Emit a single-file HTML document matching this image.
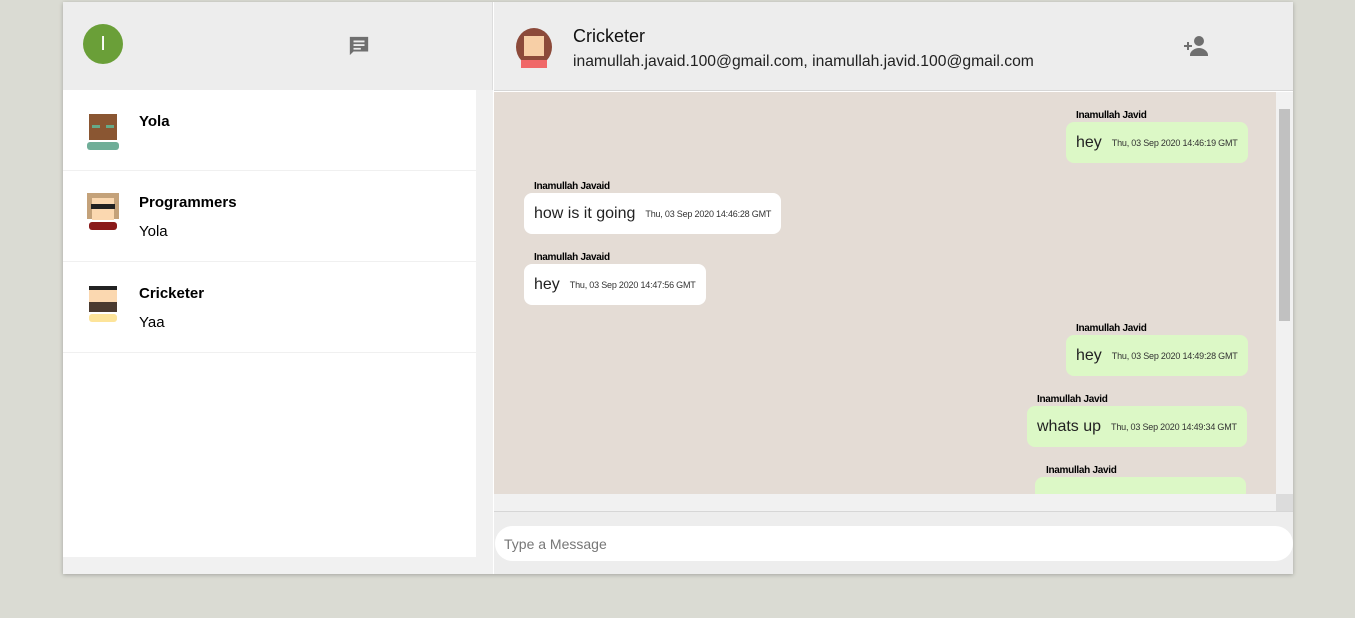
<!DOCTYPE html><html><head><style>
*{margin:0;padding:0;box-sizing:border-box}
body{width:1355px;height:618px;background:#dadbd3;font-family:"Liberation Sans",sans-serif;position:relative;overflow:hidden}
.a{position:absolute}
.app{left:63px;top:2px;width:1230px;height:572px;background:#fff;box-shadow:0 1px 4px rgba(0,0,0,.25)}
.name{font-size:10px;font-weight:bold;color:#000;letter-spacing:-.3px}
.b{position:absolute;height:41px;border-radius:8px;padding:0 10px;display:flex;align-items:center;font-size:16px;color:#222;white-space:nowrap}
.b small{font-size:9px;margin-left:10px;color:#333;letter-spacing:-.2px}
.g{background:#dcf8c6}.w{background:#fff}
.row{position:absolute;left:0;width:413px;border-bottom:1px solid #f0f0f0}
.row b{position:absolute;left:76px;font-size:15px}
.row span{position:absolute;left:76px;font-size:15px}
</style></head><body>
<div class="a app">
 <div class="a" style="left:0;top:0;width:430px;height:88px;background:#ededed;border-right:1px solid #ddd"></div>
 <div class="a" style="left:20px;top:22px;width:40px;height:40px;border-radius:50%;background:#6a9f38;color:#fff;font-size:20px;text-align:center;line-height:40px">I</div>
 <svg class="a" style="left:285px;top:33px" width="22" height="22" viewBox="0 0 24 24"><path fill="#6f6f6f" d="M2 2h20v16H6l-4 4zM6 6v2h12V6zm0 4v2h12v-2zm0 4v2h8v-2z"/></svg>
 <div class="a" style="left:0;top:88px;width:413px;height:467px;background:#fff">
  <div class="row" style="top:0;height:81px"><svg class="a" style="left:24px;top:24px" width="32" height="36"><rect x="2" y="0" width="28" height="26" fill="#8a5632"/><rect x="5" y="11" width="8" height="3" fill="#6a8"/><rect x="19" y="11" width="8" height="3" fill="#6a8"/><rect x="0" y="28" width="32" height="8" rx="3" fill="#6fae98"/></svg><b style="top:23px">Yola</b></div>
  <div class="row" style="top:81px;height:91px"><svg class="a" style="left:24px;top:22px" width="32" height="38"><rect x="0" y="0" width="32" height="26" fill="#c4a27a"/><rect x="5" y="5" width="22" height="22" fill="#fbd8b0"/><rect x="4" y="11" width="24" height="5" fill="#222"/><rect x="2" y="29" width="28" height="8" rx="3" fill="#8a1a1a"/></svg><b style="top:23px">Programmers</b><span style="top:52px">Yola</span></div>
  <div class="row" style="top:172px;height:91px"><svg class="a" style="left:24px;top:24px" width="32" height="38"><rect x="2" y="0" width="28" height="26" fill="#fbd8b0"/><rect x="2" y="0" width="28" height="4" fill="#222"/><rect x="2" y="16" width="28" height="10" fill="#4a3a30"/><rect x="2" y="28" width="28" height="8" rx="3" fill="#fde49a"/></svg><b style="top:23px">Cricketer</b><span style="top:52px">Yaa</span></div>
 </div>
 <div class="a" style="left:413px;top:88px;width:17px;height:467px;background:#f1f1f1"></div>
 <div class="a" style="left:0;top:555px;width:430px;height:17px;background:#f1f1f1"></div>
 <div class="a" style="left:431px;top:0;width:799px;height:89px;background:#ededed;border-bottom:1px solid #d6d6d6"></div>
 <svg class="a" style="left:452px;top:26px" width="38" height="40"><ellipse cx="19" cy="19" rx="18" ry="19" fill="#8c4a3a"/><rect x="9" y="8" width="20" height="20" fill="#f7cfa6"/><rect x="6" y="32" width="26" height="8" fill="#f06868"/></svg>
 <div class="a" style="left:510px;top:24px;font-size:18px;color:#111">Cricketer</div>
 <div class="a" style="left:510px;top:51px;font-size:15.7px;color:#222">inamullah.javaid.100@gmail.com, inamullah.javid.100@gmail.com</div>
 <svg class="a" style="left:1120px;top:33px" width="26" height="22" viewBox="0 0 26 22"><path fill="#6f6f6f" d="M4 7h2v3h3v2H6v3H4v-3H1v-2h3zM16 1a5 5 0 1 1 0 10a5 5 0 1 1 0-10zM7 20c0-4 5-7 9-7s9 3 9 7v1H7z"/></svg>
 <div class="a" style="left:431px;top:90px;width:782px;height:402px;background:#e4dcd5;overflow:hidden">
  <div class="a name" style="left:582px;top:18px">Inamullah Javid</div>
  <div class="b g" style="left:572px;top:30px">hey<small>Thu, 03 Sep 2020 14:46:19 GMT</small></div>
  <div class="a name" style="left:40px;top:89px">Inamullah Javaid</div>
  <div class="b w" style="left:30px;top:101px">how is it going<small>Thu, 03 Sep 2020 14:46:28 GMT</small></div>
  <div class="a name" style="left:40px;top:160px">Inamullah Javaid</div>
  <div class="b w" style="left:30px;top:172px">hey<small>Thu, 03 Sep 2020 14:47:56 GMT</small></div>
  <div class="a name" style="left:582px;top:231px">Inamullah Javid</div>
  <div class="b g" style="left:572px;top:243px">hey<small>Thu, 03 Sep 2020 14:49:28 GMT</small></div>
  <div class="a name" style="left:543px;top:302px">Inamullah Javid</div>
  <div class="b g" style="left:533px;top:314px">whats up<small>Thu, 03 Sep 2020 14:49:34 GMT</small></div>
  <div class="a name" style="left:552px;top:373px">Inamullah Javid</div>
  <div class="b g" style="left:541px;top:385px;width:211px"></div>
 </div>
 <div class="a" style="left:1213px;top:90px;width:17px;height:402px;background:#f1f1f1"><div class="a" style="left:3px;top:17px;width:11px;height:212px;background:#c1c1c1"></div></div>
 <div class="a" style="left:431px;top:492px;width:782px;height:17px;background:#f1f1f1"></div>
 <div class="a" style="left:1213px;top:492px;width:17px;height:17px;background:#dcdcdc"></div>
 <div class="a" style="left:431px;top:509px;width:799px;height:63px;background:#ededed;border-top:1px solid #d6d6d6"></div>
 <div class="a" style="left:432px;top:524px;width:798px;height:35px;background:#fff;border-radius:18px;font-size:14px;color:#777;padding:10px 9px">Type a Message</div>
</div>
</body></html>
